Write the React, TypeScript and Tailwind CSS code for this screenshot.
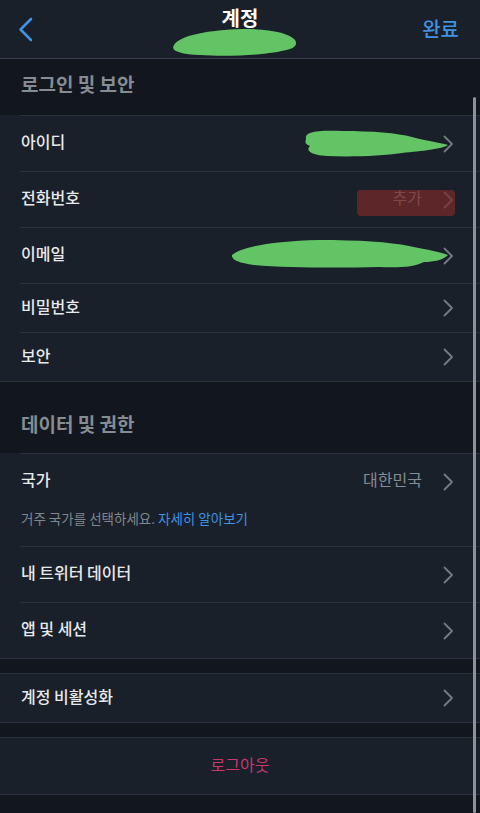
import React from "react";

const font = { fontFamily: '"Noto Sans CJK KR", "Noto Sans", sans-serif' };

function Chevron() {
  return (
    <svg width="11" height="18" viewBox="0 0 11 18" fill="none" className="shrink-0">
      <path d="M1.5 1.5 L9 9 L1.5 16.5" stroke="#737a83" strokeWidth="1.8" strokeLinecap="round" strokeLinejoin="round" />
    </svg>
  );
}

function Row({ label, value, h = "h-[55px]" }: { label: string; value?: string; h?: string }) {
  return (
    <div className={`${h} flex items-center pl-[21px] pr-[26px]`}>
      <span className="flex-1 text-[16px] font-medium text-[#e7e9ea] pb-[5px]">{label}</span>
      {value && <span className="text-[16px] text-[#868c93] mr-[21px] pb-[5px]">{value}</span>}
      <Chevron />
    </div>
  );
}

const Inset = () => <div className="ml-5 h-px bg-[#2b323c]" />;
const Full = () => <div className="h-px bg-[#2b323c]" />;

export default function App() {
  return (
    <div className="relative w-[480px] h-[813px] overflow-hidden bg-[#12161d]" style={font}>
      {/* header */}
      <div className="relative h-[59px] bg-[#1a202a] border-b border-[#3a4049] flex items-center justify-between px-[18px]">
        <svg width="16" height="26" viewBox="0 0 16 26" fill="none" className="mt-[2px]">
          <path d="M13 2 L2.5 12.5 L13 23" stroke="#3f92e4" strokeWidth="2.6" strokeLinecap="round" strokeLinejoin="round" />
        </svg>
        <span className="absolute left-1/2 -translate-x-1/2 top-[3px] text-[20px] font-bold text-white">계정</span>
        <span className="text-[20px] font-medium text-[#3f92e4] mr-[3px]">완료</span>
        <svg className="absolute left-[170px] top-[27px]" width="130" height="31" viewBox="0 0 130 31">
          <path d="M4 18 C10 8 40 3 72 2 C100 2 118 6 124 12 C128 16 126 20 120 22 C100 28 60 30 30 28 C10 27 0 24 4 18 Z" fill="#63c465" />
        </svg>
      </div>

      {/* 로그인 및 보안 */}
      <div className="h-[56px] flex items-center px-[21px] pb-[6px] text-[19px] font-bold text-[#858c94]">로그인 및 보안</div>
      <div className="bg-[#1a202a]">
        <Inset />
        <div className="relative">
          <Row label="아이디" />
          <svg className="absolute left-[302px] top-[13px]" width="150" height="30" viewBox="0 0 150 30">
            <path d="M4 10 C2 3 14 1 40 2 C70 2 95 4 110 8 C125 12 140 14 146 16 C140 20 120 22 100 24 C80 27 50 28 25 27 C10 26 3 22 8 17 C3 15 3 13 4 10 Z" fill="#63c465" />
          </svg>
        </div>
        <Inset />
        <div className="relative">
          <Row label="전화번호" value="추가" />
          <div className="absolute left-[357px] top-[18px] w-[98px] h-[26px] rounded-[4px] bg-[#7a2b2b] opacity-70" />
        </div>
        <Inset />
        <div className="relative">
          <Row label="이메일" />
          <svg className="absolute left-[229px] top-[10px]" width="222" height="34" viewBox="0 0 222 34">
            <path d="M3 17 C10 10 40 3 90 2 C130 2 160 4 180 8 C200 12 212 14 219 17 C214 22 205 24 195 24 C185 29 170 30 150 29 C110 30 60 30 25 27 C10 25 2 22 3 17 Z" fill="#63c465" />
          </svg>
        </div>
        <Inset />
        <Row label="비밀번호" h="h-[48px]" />
        <Inset />
        <Row label="보안" h="h-[48px]" />
      </div>
      <Full />

      {/* 데이터 및 권한 */}
      <div className="pt-[15px] h-[71px] flex items-center px-[21px] text-[19px] font-bold text-[#858c94]">
        <span className="pb-[1px]">데이터 및 권한</span>
      </div>
      <div className="bg-[#1a202a]">
        <Inset />
        <Row label="국가" value="대한민국" />
        <p className="px-[21px] pb-[19px] text-[13.5px] leading-[18px] text-[#80868e]">
          거주 국가를 선택하세요. <span className="text-[#3f92e4]">자세히 알아보기</span>
        </p>
        <Inset />
        <Row label="내 트위터 데이터" />
        <Inset />
        <Row label="앱 및 세션" />
      </div>
      <Full />
      <div className="h-[14px]" />
      <Full />
      <div className="bg-[#1a202a]">
        <Row label="계정 비활성화" h="h-[48px]" />
      </div>
      <Full />
      <div className="h-[14px]" />
      <Full />
      <div className="bg-[#1a202a] h-[56px] flex items-center justify-center pb-[4px] text-[16px] text-[#c9386a]">로그아웃</div>
      <Full />

      {/* scrollbar */}
      <div className="absolute right-[4px] top-[97px] w-[3px] h-[716px] rounded-full bg-[#8d9297]" />
    </div>
  );
}
